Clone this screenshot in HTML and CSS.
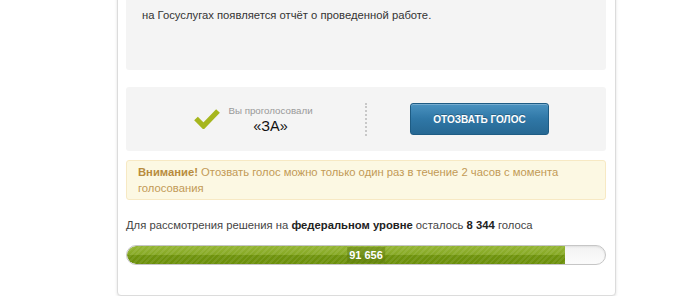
FILE: index.html
```html
<!DOCTYPE html>
<html lang="ru">
<head>
<meta charset="utf-8">
<link rel="stylesheet" href="styles.css">
</head>
<body>
<div class="card">
  <div class="report">на Госуслугах появляется отчёт о проведенной работе.</div>
  <div class="vote">
    <div class="vote-left">
      <svg class="check" width="26" height="20" viewBox="0 0 26 20"><polyline points="2,9.5 9.5,17 24,2" fill="none" stroke="#a6b61e" stroke-width="5.2"/></svg>
      <div class="voted">
        <div class="voted-label">Вы проголосовали</div>
        <div class="voted-value">«ЗА»</div>
      </div>
    </div>
    <div class="vote-right">
      <button class="revoke">ОТОЗВАТЬ ГОЛОС</button>
    </div>
  </div>
  <div class="alert"><b>Внимание!</b> Отозвать голос можно только один раз в течение 2 часов с момента голосования</div>
  <p class="remain">Для рассмотрения решения на <b>федеральном уровне</b> осталось <b>8 344</b> голоса</p>
  <div class="progress">
    <div class="fill" style="width: 91.656%"></div>
    <span class="count">91 656</span>
  </div>
</div>
</body>
</html>
```

FILE: styles.css
```css
html, body {
  margin: 0;
  padding: 0;
  background: #fff;
  font-family: "Liberation Sans", Arial, sans-serif;
  font-size: 11.25px;
  color: #333;
}

.card {
  box-sizing: border-box;
  width: 499px;
  margin: -20px 0 0 117px;
  padding: 9px 9px 30px 8px;
  background: #fff;
  border: 1px solid #dcdcdc;
  border-radius: 0 0 4px 4px;
  box-shadow: 0 1px 3px rgba(0, 0, 0, 0.12);
}

.report {
  background: #f4f4f4;
  border-radius: 3px;
  padding: 16px 16px 46px 16px;
  line-height: 18px;
  color: #333;
}

.vote {
  margin-top: 17px;
  height: 64px;
  background: #f4f4f4;
  border-radius: 3px;
  display: grid;
  grid-template-columns: 241px 1fr;
  align-items: center;
}

.vote-left {
  display: flex;
  align-items: center;
  justify-content: center;
  gap: 8px;
  padding-left: 16px;
  height: 33px;
  border-right: 2px dotted #c8c8c8;
}

.check {
  display: block;
  margin-top: 0;
}

.voted {
  display: flex;
  flex-direction: column;
  align-items: center;
  margin-top: 3px;
}

.voted-label {
  font-size: 9.75px;
  color: #999;
  line-height: 13px;
  margin-top: -2px;
}

.voted-value {
  font-size: 14.5px;
  color: #111;
  line-height: 19px;
}

.vote-right {
  display: flex;
  justify-content: center;
  padding-right: 14px;
}

.revoke {
  width: 139px;
  height: 32px;
  border: 1px solid #1e5c84;
  border-radius: 3px;
  background: linear-gradient(to bottom, #4a92c0 0%, #2f77a6 50%, #276893 100%);
  box-shadow: inset 0 1px 0 rgba(255, 255, 255, 0.25);
  color: #fff;
  font-family: "Liberation Sans", Arial, sans-serif;
  font-weight: bold;
  font-size: 10px;
  padding: 0;
  text-shadow: 0 -1px 0 rgba(0, 0, 0, 0.25);
}

.alert {
  margin-top: 9px;
  background: #fcf8e3;
  border: 1px solid #f7e9c4;
  border-radius: 3px;
  padding: 3px 11px;
  line-height: 16px;
  color: #c29a56;
}

.alert b {
  color: #b88c3e;
}

.remain {
  margin: 16px 0 0 0;
  line-height: 18px;
  color: #444;
}

.remain b {
  color: #222;
}

.progress {
  position: relative;
  margin-top: 11px;
  height: 18px;
  border: 1px solid #c6c6c6;
  border-radius: 10px;
  background: linear-gradient(to bottom, #f2f2f2, #fbfbfb);
  box-shadow: inset 0 1px 2px rgba(0, 0, 0, 0.08);
  overflow: hidden;
}

.fill {
  height: 100%;
  background:
    repeating-linear-gradient(135deg, rgba(255, 255, 255, 0.08) 0 2px, rgba(255, 255, 255, 0) 2px 4px),
    linear-gradient(to bottom, #94b534 0%, #86a824 50%, #6f930e 52%, #6b8f0b 100%);
  border-radius: 10px 0 0 10px;
}

.count {
  position: absolute;
  left: 50%;
  top: 1px;
  transform: translateX(-50%);
  padding: 0 2px;
  background: rgba(90, 120, 10, 0.45);
  color: #fff;
  font-weight: bold;
  font-size: 11px;
  line-height: 16px;
}
```
